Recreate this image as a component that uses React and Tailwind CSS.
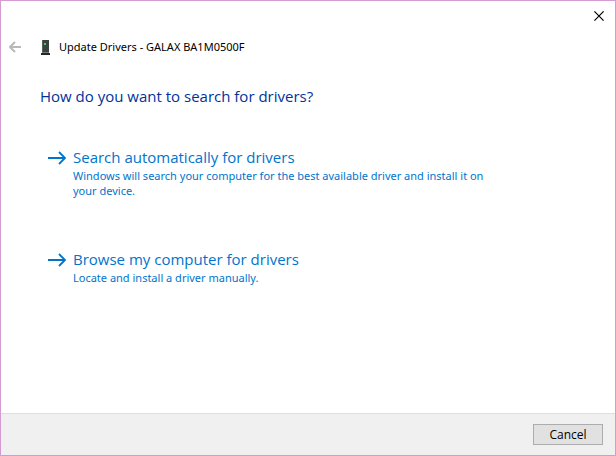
import React from 'react'

const OPTIONS = [
  {
    title: 'Search automatically for drivers',
    text: 'Windows will search your computer for the best available driver and install it on your device.',
  },
  {
    title: 'Browse my computer for drivers',
    text: 'Locate and install a driver manually.',
  },
]

function CloseIcon() {
  return (
    <svg width="10" height="10" viewBox="0 0 10 10" fill="none" stroke="#000" strokeWidth="1.2">
      <path d="M0.4 0.4L9.6 9.6M9.6 0.4L0.4 9.6" />
    </svg>
  )
}

function BackIcon() {
  return (
    <svg width="12" height="12" viewBox="0 0 12 12" fill="none" stroke="#b9b9b9" strokeWidth="2">
      <path d="M12 6H1M6 1L1 6l5 5" />
    </svg>
  )
}

function DriveIcon() {
  return (
    <svg width="10" height="15" viewBox="0 0 10 15">
      <rect x="1" y="0" width="7" height="13" fill="#3c4040" />
      <rect x="1" y="0" width="1" height="13" fill="#5a5e5e" />
      <rect x="1" y="12" width="7" height="1" fill="#777b7b" />
      <rect x="0" y="13" width="9" height="2" fill="#252828" />
      <rect x="3" y="3" width="2" height="2" fill="#35d45c" />
    </svg>
  )
}

function ArrowIcon() {
  return (
    <svg className="mt-[5px] shrink-0" width="18" height="14" viewBox="0 0 18 14" fill="none" stroke="#0074cc" strokeWidth="1.8">
      <path d="M0 7H17M11 1l6 6-6 6" />
    </svg>
  )
}

export default function App() {
  return (
    <div className="flex min-h-screen flex-col border border-[#d49bd3] bg-white font-['Open_Sans','Noto_Sans',sans-serif]">
      <div className="flex h-[30px] justify-end">
        <button aria-label="Close" className="flex w-8 items-center justify-center">
          <CloseIcon />
        </button>
      </div>

      <header className="flex h-8 items-center pl-2">
        <button aria-label="Back" className="mr-5">
          <BackIcon />
        </button>
        <DriveIcon />
        <span className="ml-2 font-['Noto_Sans',sans-serif] text-[11px] text-black">Update Drivers - GALAX BA1M0500F</span>
      </header>

      <main className="grow pt-[23px] pr-4 pl-[39px]">
        <h1 className="text-[15px] leading-5 text-[#003399]">How do you want to search for drivers?</h1>
        <div className="mt-10 flex flex-col items-start gap-[50px] pl-2">
          {OPTIONS.map(option => (
            <button key={option.title} className="flex max-w-[456px] gap-[7px] text-left text-[#0074cc]">
              <ArrowIcon />
              <span>
                <span className="block text-[15px] leading-[22px]">{option.title}</span>
                <span className="block font-['Noto_Sans',sans-serif] text-[11px] leading-[15px]">{option.text}</span>
              </span>
            </button>
          ))}
        </div>
      </main>

      <footer className="flex h-[42px] items-center justify-end border-t border-[#dfdfdf] bg-[#f0f0f0] pr-3">
        <button className="h-[21px] w-[70px] border border-[#adadad] bg-[#e1e1e1] text-[12px] leading-4 text-black">Cancel</button>
      </footer>
    </div>
  )
}
